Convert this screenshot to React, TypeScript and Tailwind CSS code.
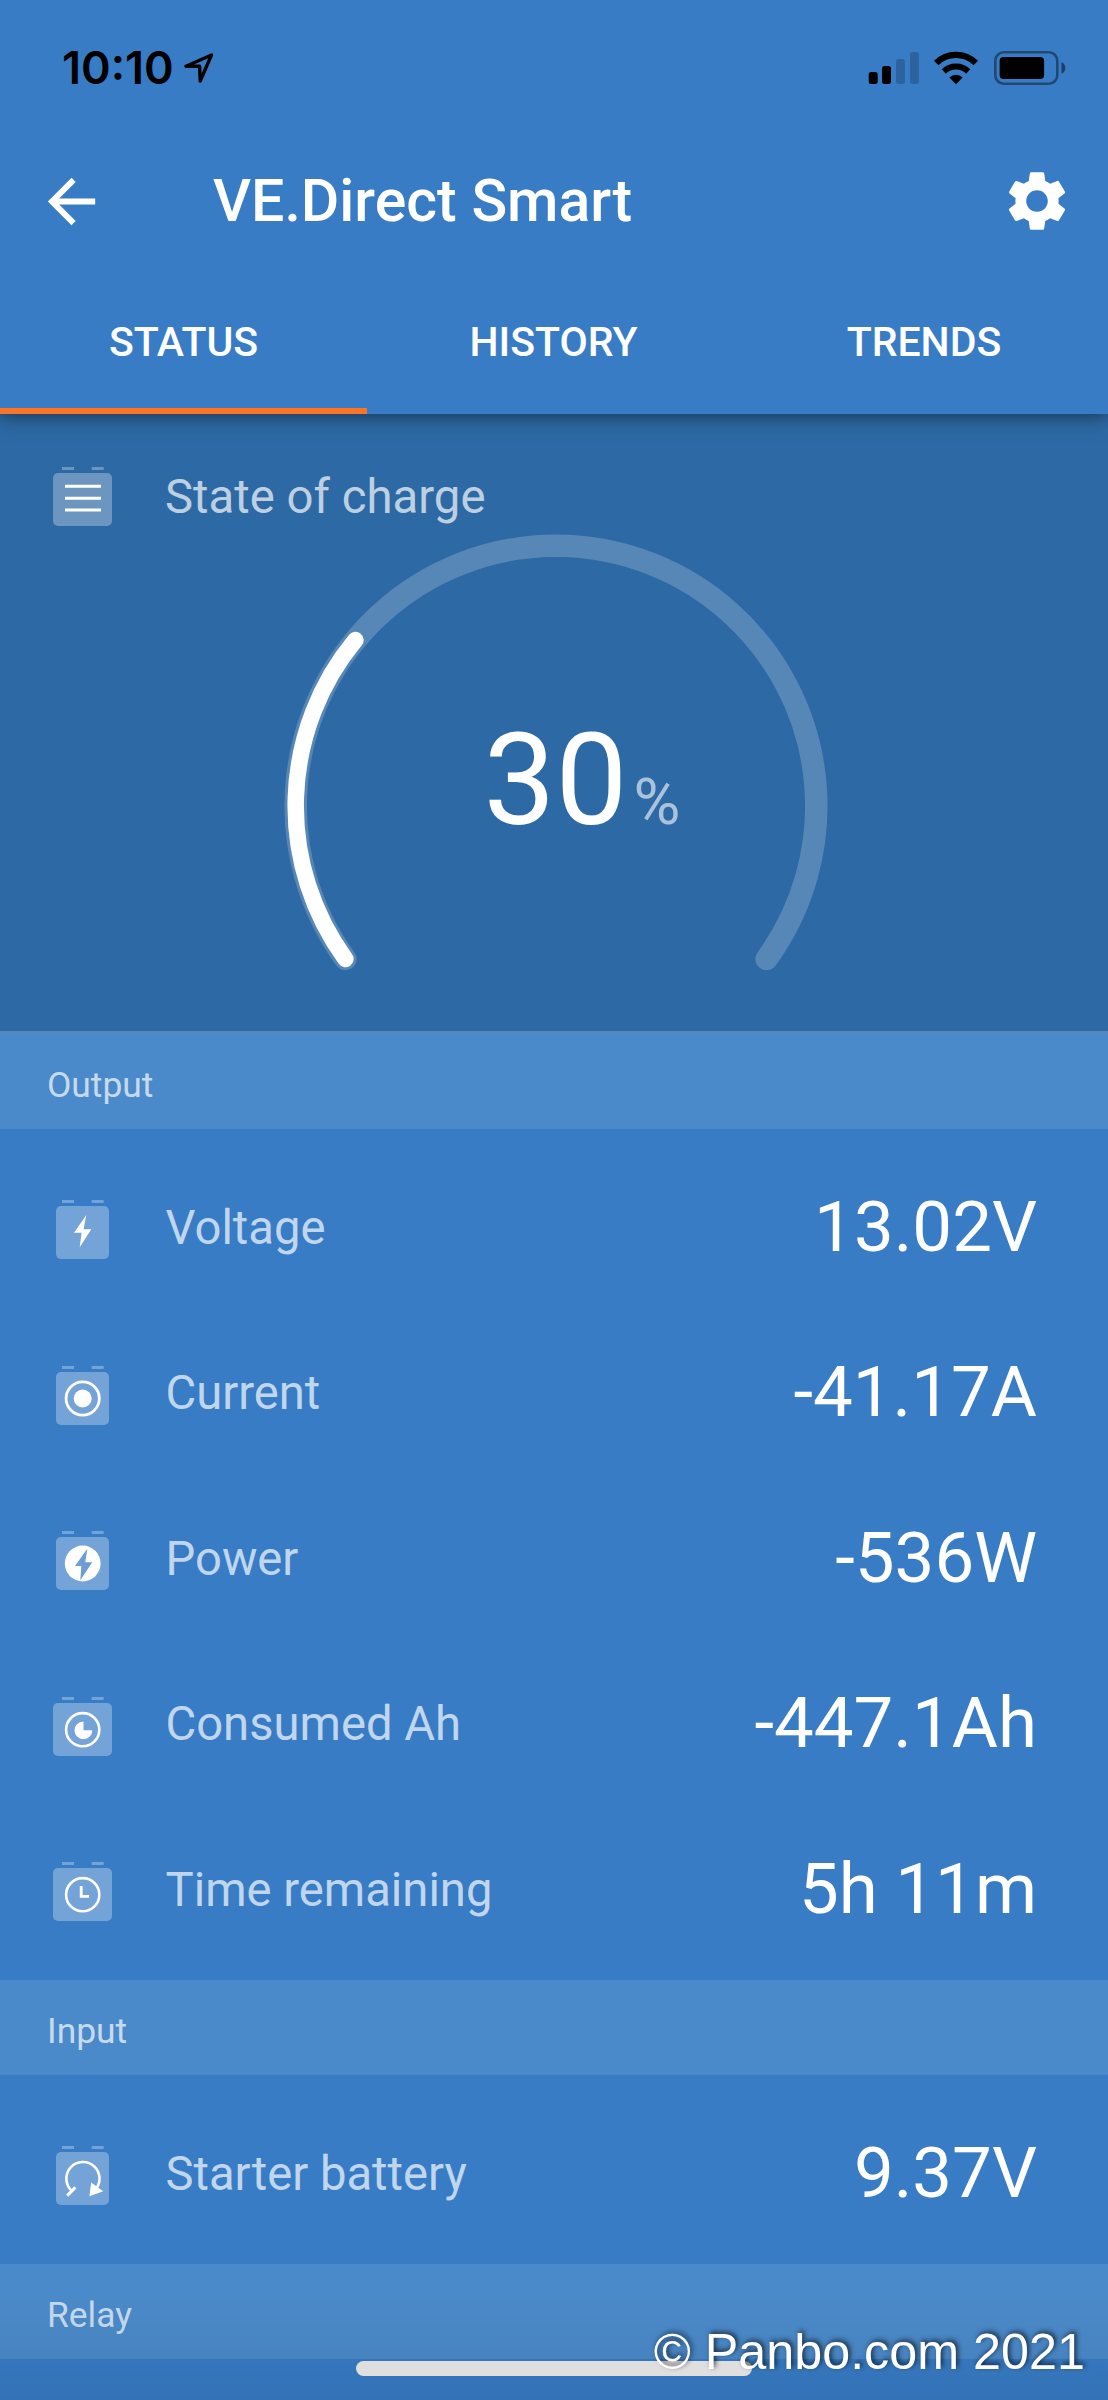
import React, { useState } from 'react';
import { MdArrowBack, MdSettings } from 'react-icons/md';

type IconName = 'bars' | 'bolt' | 'current' | 'power' | 'consumed' | 'clock' | 'starter';

interface Reading {
  label: string;
  value: string;
  icon: IconName;
}

const tabs = ['STATUS', 'HISTORY', 'TRENDS'];

const output: Reading[] = [
  { label: 'Voltage', value: '13.02V', icon: 'bolt' },
  { label: 'Current', value: '-41.17A', icon: 'current' },
  { label: 'Power', value: '-536W', icon: 'power' },
  { label: 'Consumed Ah', value: '-447.1Ah', icon: 'consumed' },
  { label: 'Time remaining', value: '5h 11m', icon: 'clock' },
];

const input: Reading[] = [{ label: 'Starter battery', value: '9.37V', icon: 'starter' }];

const wideIcons: IconName[] = ['bars', 'consumed', 'clock'];

const glyphs: Record<IconName, React.ReactNode> = {
  bars: <path d="M12 19.2h36M12 31.2h36M12 43h36" stroke="#fff" strokeWidth="3" />,
  bolt: <path d="M33.3 15 21 32.7h7.6L26.7 47.3 38.3 29.3h-7.7z" fill="#fff" />,
  current: (
    <>
      <circle cx="29.7" cy="32.5" r="16.6" fill="none" stroke="#fff" strokeWidth="2.8" />
      <circle cx="29.7" cy="32.5" r="9" fill="#fff" />
    </>
  ),
  power: (
    <>
      <circle cx="29.7" cy="32.5" r="17.9" fill="#fff" />
      <path d="M34.3 17.7 22 35h6.3l-1 14.3 12-18h-7z" fill="#6c9dd3" />
    </>
  ),
  consumed: (
    <>
      <circle cx="29.7" cy="32.7" r="16.6" fill="none" stroke="#fff" strokeWidth="2.6" />
      <path d="M30.5 33.2V24.4a8.9 8.9 0 1 0 8.8 8.8z" fill="#fff" />
    </>
  ),
  clock: (
    <>
      <circle cx="29.7" cy="32.7" r="16.6" fill="none" stroke="#fff" strokeWidth="2.6" />
      <path d="M28.2 24v10.3H36" fill="none" stroke="#fff" strokeWidth="2.8" />
    </>
  ),
  starter: (
    <>
      <path d="M18.8 44.9A16.6 16.6 0 1 1 42 44" fill="none" stroke="#fff" strokeWidth="2.6" />
      <path d="M14.2 49.6 22.4 41.4" stroke="#fff" strokeWidth="3" />
      <path d="M38.2 36.4 50.2 45.3 36.4 50.3z" fill="#fff" />
    </>
  ),
};

function BatteryIcon({ name }: { name: IconName }) {
  const wide = wideIcons.includes(name);
  return (
    <svg width="59" height="59" viewBox="0 0 59 59" className="shrink-0">
      <g fill="#fff" fillOpacity="0.3">
        <rect x={wide ? 0 : 3} y="6" width={wide ? 59 : 53} height="53" rx="5" />
        <rect x="9" y="0" width="12" height="3" />
        <rect x="38.7" y="0" width="12" height="3" />
      </g>
      {glyphs[name]}
    </svg>
  );
}

function StatusBar() {
  return (
    <div className="flex h-[136px] items-center justify-between pr-[42px] pl-[62px]">
      <div className="flex items-center">
        <span className="-mt-px font-[Inter,sans-serif] text-[45px] leading-none font-semibold text-black">10:10</span>
        <svg width="30" height="30" viewBox="0 0 30 30" className="-mt-px ml-[10px]">
          <path d="M27.5 2 2 13.2h13.6L16.2 28z" fill="none" stroke="#000" strokeWidth="3.4" strokeLinejoin="round" />
        </svg>
      </div>
      <div className="flex items-center">
        <svg width="51" height="34" viewBox="0 0 51 34">
          <rect x="0.7" y="21" width="9" height="12" rx="2.5" />
          <rect x="14" y="15" width="9" height="18" rx="2.5" />
          <rect x="28" y="8" width="9" height="25" rx="2.5" fillOpacity="0.2" />
          <rect x="42" y="1" width="9" height="32" rx="2.5" fillOpacity="0.2" />
        </svg>
        <svg width="46" height="34" viewBox="0 0 46 34" className="ml-[14px]">
          <path d="M3.2 12a28.2 28.2 0 0 1 39.6 0" fill="none" stroke="#000" strokeWidth="6.4" />
          <path d="M10.8 20.5a17.4 17.4 0 0 1 24.4 0" fill="none" stroke="#000" strokeWidth="6" />
          <path d="M23 33.2 16.4 26.5a9.4 9.4 0 0 1 13.2 0z" />
        </svg>
        <svg width="72" height="34" viewBox="0 0 72 34" className="ml-[15px]">
          <rect x="1.3" y="1.3" width="62" height="31.4" rx="8.5" fill="none" stroke="#000" strokeOpacity="0.42" strokeWidth="2.6" />
          <rect x="5.6" y="6" width="44.5" height="22" rx="4" />
          <path d="M67.5 11c5 2.5 5 9.5 0 12z" fillOpacity="0.5" />
        </svg>
      </div>
    </div>
  );
}

function Header() {
  const [active, setActive] = useState('STATUS');
  return (
    <header className="relative z-10 h-[414px] bg-[#387cc6] shadow-[0_2px_18px_rgba(0,0,0,0.5)]">
      <StatusBar />
      <div className="flex h-[130px] items-center justify-between pr-[35px] pl-9 text-white">
        <div className="flex items-center">
          <MdArrowBack className="size-[71px]" />
          <h1 className="-mt-[2px] ml-[106px] text-[59px] leading-none font-medium">VE.Direct Smart</h1>
        </div>
        <MdSettings className="size-[72px]" />
      </div>
      <nav className="grid h-[148px] grid-cols-[367px_373px_368px]">
        {tabs.map(tab => (
          <button
            key={tab}
            onClick={() => setActive(tab)}
            className={`border-b-[6px] pt-3 text-[41px] font-medium text-white ${active === tab ? 'border-[#ff7424]' : 'border-transparent'}`}
          >
            {tab}
          </button>
        ))}
      </nav>
    </header>
  );
}

const RADIUS = 260.3;
const SWEEP = 252;

// point on the dial, measured clockwise from its lower left end
function dialPoint(deg: number) {
  const rad = ((144 + deg) * Math.PI) / 180;
  return `${272 + RADIUS * Math.cos(rad)} ${272 + RADIUS * Math.sin(rad)}`;
}

function dialArc(deg: number) {
  return `M${dialPoint(0)}A${RADIUS} ${RADIUS} 0 ${deg > 180 ? 1 : 0} 1 ${dialPoint(deg)}`;
}

function StateOfCharge({ percent }: { percent: number }) {
  return (
    <section className="h-[617px] bg-[#2d69a4] pt-[53px]">
      <div className="flex h-[67px] items-start pl-[53px]">
        <BatteryIcon name="bars" />
        <span className="mt-[2px] ml-[53px] text-[47.3px] leading-[56px] text-white/70">State of charge</span>
      </div>
      <div className="relative mx-auto h-[450px] w-[547px] pl-[3px]">
        <svg width="544" height="450" viewBox="0 0 544 450" fill="none" strokeLinecap="round">
          <path d={dialArc(SWEEP)} stroke="#fff" strokeOpacity="0.2" strokeWidth="22.5" />
          <path d={dialArc((SWEEP * percent) / 100)} stroke="#fff" strokeWidth="16.5" />
        </svg>
        <div className="absolute top-[171px] left-[203px] flex items-baseline">
          <span className="text-[128px] leading-[150px] text-white">{percent}</span>
          <span className="ml-[6px] text-[64px] leading-none text-white/60">%</span>
        </div>
      </div>
    </section>
  );
}

function SectionTitle({ title }: { title: string }) {
  return (
    <h2 className="flex h-[95px] items-center bg-[#4b8aca] pt-[8px] pl-[47px] text-[35.4px] leading-none text-white/70">{title}</h2>
  );
}

function Readings({ items }: { items: Reading[] }) {
  return (
    <ul className="py-[11.75px]">
      {items.map(item => (
        <li key={item.label} className="flex h-[165.5px] items-center pt-[7px] pr-[71px] pl-[53px]">
          <div className="mt-[5px]">
            <BatteryIcon name={item.icon} />
          </div>
          <span className="mt-[3px] ml-[53.5px] text-[47.2px] leading-none text-white/70">{item.label}</span>
          <span className="ml-auto text-[70.8px] leading-none text-white">{item.value}</span>
        </li>
      ))}
    </ul>
  );
}

export default function App() {
  return (
    <div className="relative h-[2400px] w-[1108px] overflow-hidden bg-[#387cc6] font-[Roboto,sans-serif]">
      <Header />
      <StateOfCharge percent={30} />
      <div className="border-t-[3px] border-[#5589bd]">
        <SectionTitle title="Output" />
      </div>
      <Readings items={output} />
      <SectionTitle title="Input" />
      <Readings items={input} />
      <SectionTitle title="Relay" />

      {/* Home indicator and watermark sit over the scrolled list */}
      <div className="absolute inset-x-0 bottom-0 h-[110px] bg-linear-to-b from-transparent to-black/8" />
      <div className="absolute bottom-[24px] left-[356px] h-[15px] w-[396px] rounded-full bg-[#dfdfdf]" />
      <div className="absolute right-[23px] bottom-[23px] font-['Liberation_Sans',Arial,sans-serif] text-[50.3px] leading-none text-white [text-shadow:2px_-2px_5px_rgba(0,0,0,0.7)]">
        © Panbo.com 2021
      </div>
    </div>
  );
}
